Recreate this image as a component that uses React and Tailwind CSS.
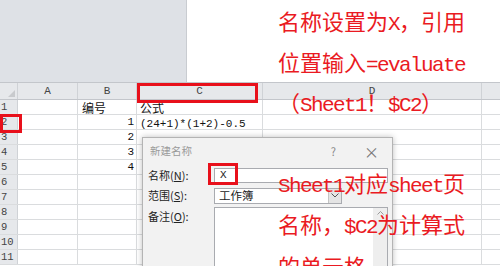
import React from "react";

// --- grid geometry ---
const COLS = [
  { key: "A", w: "w-[60px]" },
  { key: "B", w: "w-[59px]" },
  { key: "C", w: "w-[126px]" },
  { key: "D", w: "w-[219px]" },
];

const ROWS = [
  { n: 1, b: "编号", c: "公式", cjk: true },
  { n: 2, b: "1", c: "(24+1)*(1+2)-0.5" },
  { n: 3, b: "2" },
  { n: 4, b: "3" },
  { n: 5, b: "4" },
  { n: 6 },
  { n: 7 },
  { n: 8 },
  { n: 9 },
  { n: 10 },
  { n: 11 },
];

const mono = { fontFamily: '"Liberation Mono", monospace' };

// half-width chars in the red note
const A = ({ children }) => (
  <span className="text-[21px] leading-none tracking-[-1.6px] font-['Liberation_Mono',monospace]">{children}</span>
);

const NoteLine = ({ children }) => (
  <div className="h-[40.5px] flex items-center">
    <div className="leading-none">{children}</div>
  </div>
);

const Sheet = () => (
  <div className="flex flex-col">
    {/* column headers */}
    <div className="flex h-[18px] bg-[#e6e8eb] border-t border-b border-[#c3c6cb] text-[#444] text-[11px] font-['Liberation_Mono',monospace]">
      <div className="w-[18px] border-r border-[#cfd2d6] relative">
        <div className="absolute right-[2px] bottom-[2px] w-0 h-0 border-l-[7px] border-l-transparent border-b-[7px] border-b-[#c8cacd]" />
      </div>
      {COLS.map((c) => (
        <div key={c.key} className={`${c.w} border-r border-[#cfd2d6] flex items-center justify-center`}>
          {c.key}
        </div>
      ))}
      <div className="flex-1" />
    </div>

    {/* rows */}
    {ROWS.map((r) => (
      <div key={r.n} className="flex h-[15px] border-b border-[#dadcde] text-[12px] leading-[15px]">
        <div className="w-[18px] bg-[#e6e8eb] border-r border-[#cfd2d6] pl-[1px] text-[10.5px] text-[#444]" style={mono}>
          {r.n}
        </div>
        <div className="w-[60px] border-r border-[#dadcde]" />
        <div className="w-[59px] border-r border-[#dadcde] px-[2px] text-[#111]">
          {r.cjk ? (
            <span className="pl-[2px] font-['Noto_Sans_CJK_SC',sans-serif] text-[12px]">{r.b}</span>
          ) : (
            <div className="text-right text-[11px]" style={mono}>{r.b}</div>
          )}
        </div>
        <div className="w-[126px] border-r border-[#dadcde] pl-[3px] text-[#111] whitespace-nowrap">
          {r.cjk ? (
            <span className="font-['Noto_Sans_CJK_SC',sans-serif] text-[12px]">{r.c}</span>
          ) : (
            <span className="text-[11px]" style={mono}>{r.c}</span>
          )}
        </div>
        <div className="w-[219px] border-r border-[#dadcde]" />
        <div className="flex-1" />
      </div>
    ))}
  </div>
);

const Dialog = () => (
  <div className="absolute left-[142px] top-[137px] w-[251px] h-[140px] bg-[#f2f2f2] border border-[#b4b4b4] shadow-[0_0_6px_rgba(0,0,0,0.25)] font-['Noto_Sans_CJK_SC',sans-serif] text-[#222]">
    {/* title bar */}
    <div className="flex items-center h-[26px] pl-[7px] pr-[13px]">
      <span className="text-[10.5px] text-[#9a9a9a]">新建名称</span>
      <span className="ml-auto text-[11px] text-[#888]">?</span>
      <span className="ml-[28px] text-[15px] leading-none text-[#777]">×</span>
    </div>

    <div className="flex flex-col gap-[3px] pl-[5px] pr-[4px]">
      {/* name */}
      <div className="flex items-center h-[17px] mt-[3px]">
        <span className="w-[66px] text-[11px]">名称(<span className="underline">N</span>):</span>
        <div className="flex-1 h-[15px] bg-white border border-[#a9abb0] pl-[5px] text-[11px] leading-[13px]" style={mono}>
          X
        </div>
      </div>

      {/* scope */}
      <div className="flex items-center h-[17px]">
        <span className="w-[66px] text-[11px]">范围(<span className="underline">S</span>):</span>
        <div className="w-[128px] h-[16px] bg-white border border-[#a9abb0] flex items-center">
          <span className="pl-[4px] text-[11.5px]">工作簿</span>
          <div className="ml-auto w-[13px] h-full bg-[#e4e4e4] border-l border-[#c4c4c4] flex items-center justify-center">
            <svg width="8" height="5" viewBox="0 0 8 5">
              <path d="M0.5 0.5 L4 4 L7.5 0.5" fill="none" stroke="#555" strokeWidth="1" />
            </svg>
          </div>
        </div>
      </div>

      {/* comment */}
      <div className="flex items-start">
        <span className="w-[66px] text-[11px] mt-[1px]">备注(<span className="underline">O</span>):</span>
        <div className="flex-1 h-[70px] bg-white border border-[#a9abb0] flex justify-end">
          <div className="w-[14px] h-full bg-[#eeeeee] flex justify-center pt-[3px]">
            <svg width="7" height="4" viewBox="0 0 7 4">
              <path d="M0.5 3.5 L3.5 0.5 L6.5 3.5" fill="none" stroke="#9a9a9a" strokeWidth="1" />
            </svg>
          </div>
        </div>
      </div>
    </div>
  </div>
);

const Note = () => (
  <div className="absolute left-[278px] top-[2px] text-[22px] text-[#ea1a22] font-['Noto_Sans_CJK_SC',sans-serif] whitespace-nowrap">
    <NoteLine>名称设置为<A>X</A>，引用</NoteLine>
    <NoteLine>位置输入<A>=evaluate</A></NoteLine>
    <NoteLine>（<A>Sheet1</A>！<A>$C2</A>）</NoteLine>
    <NoteLine>&nbsp;</NoteLine>
    <NoteLine><A>Sheet1</A>对应<A>sheet</A>页</NoteLine>
    <NoteLine>名称，<A>$C2</A>为计算式</NoteLine>
    <NoteLine>的单元格</NoteLine>
  </div>
);

export default function App() {
  return (
    <div className="relative w-[500px] h-[266px] overflow-hidden bg-white">
      {/* top band */}
      <div className="flex h-[82px]">
        <div className="w-[187px] bg-[#dee1e6] border-r border-[#c9ccd1]" />
        <div className="flex-1 bg-white" />
      </div>

      <Sheet />

      <Dialog />

      {/* red highlight boxes */}
      <div className="absolute left-[137px] top-[83px] w-[121px] h-[20px] border-[3px] border-[#e8101b]" />
      <div className="absolute left-0 top-[114px] w-[22px] h-[19px] border-[3px] border-[#e8101b]" />
      <div className="absolute left-[208px] top-[163px] w-[30px] h-[22px] border-[3px] border-[#e8101b]" />

      <Note />
    </div>
  );
}
